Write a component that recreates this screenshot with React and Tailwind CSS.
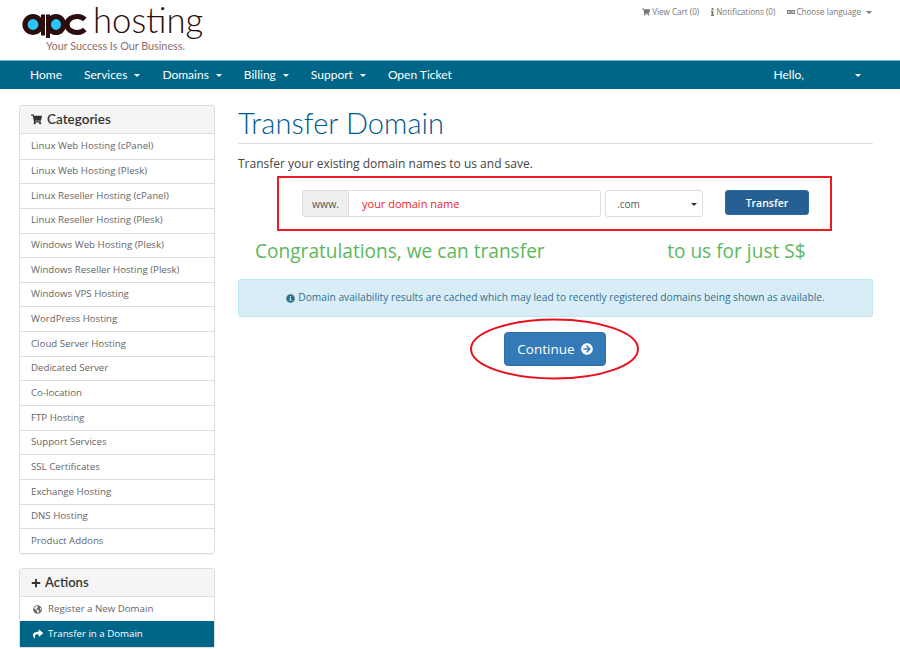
import React from "react";
import {
  FaShoppingCart,
  FaInfo,
  FaLanguage,
  FaPlus,
  FaGlobeAmericas,
  FaShare,
  FaArrowCircleRight,
  FaInfoCircle,
} from "react-icons/fa";

const categories = [
  "Linux Web Hosting (cPanel)",
  "Linux Web Hosting (Plesk)",
  "Linux Reseller Hosting (cPanel)",
  "Linux Reseller Hosting (Plesk)",
  "Windows Web Hosting (Plesk)",
  "Windows Reseller Hosting (Plesk)",
  "Windows VPS Hosting",
  "WordPress Hosting",
  "Cloud Server Hosting",
  "Dedicated Server",
  "Co-location",
  "FTP Hosting",
  "Support Services",
  "SSL Certificates",
  "Exchange Hosting",
  "DNS Hosting",
  "Product Addons",
];

const Caret = () => (
  <span className="inline-block w-0 h-0 border-x-[3px] border-x-transparent border-t-[3.5px] border-t-current" />
);

const NavItem = ({ label, caret }) => (
  <a className="flex items-center gap-[7px] text-white text-[12px] font-['Lato',sans-serif]">
    {label}
    {caret && <Caret />}
  </a>
);

const Logo = () => (
  <div className="relative w-[210px] h-[55px]">
    <svg width="70" height="30" viewBox="20 10 70 30" className="absolute left-[20px] top-[10px]">
      <ellipse cx="33" cy="24.5" rx="8" ry="8" fill="#29c5f6" stroke="#2b0d0d" strokeWidth="5.2" />
      <rect x="41" y="14.5" width="4" height="21" fill="#2b0d0d" />
      <ellipse cx="56" cy="24.5" rx="7.6" ry="8" fill="#29c5f6" stroke="#2b0d0d" strokeWidth="5.2" />
      <rect x="46" y="14.5" width="4" height="23.5" fill="#2b0d0d" />
      <path d="M84.8 19.5A10 8 0 1 0 84.8 29.5" fill="none" stroke="#2b0d0d" strokeWidth="5.2" />
    </svg>
    <span className="absolute left-[93px] top-[1.5px] text-[34.7px] leading-[36px] font-light text-[#2b0d0d] font-['Lato',sans-serif]">
      hosting
    </span>
    <span className="absolute left-[46px] top-[38.6px] text-[10.8px] leading-[14px] text-[#8d6e6e] font-['Lato',sans-serif] whitespace-nowrap">
      Your Success Is Our Business.
    </span>
  </div>
);

const App = () => {
  return (
    <div className="w-[900px] h-[649px] overflow-hidden bg-white font-['Open_Sans',sans-serif] text-[#555]">
      <header className="h-[60px] flex justify-between pr-[28px]">
        <Logo />
        <div className="flex gap-[12px] pt-[6px] text-[8.1px] leading-[12px] text-[#777]">
          <span className="flex items-center gap-[2px] h-[12px]">
            <FaShoppingCart className="text-[8px]" /> View Cart (0)
          </span>
          <span className="flex items-center gap-[2px] h-[12px]">
            <FaInfo className="w-[3px] h-[8px]" /> Notifications (0)
          </span>
          <span className="flex items-center gap-[1px] h-[12px]">
            <FaLanguage className="text-[8px]" /> Choose language
            <span className="ml-[4px] flex"><Caret /></span>
          </span>
        </div>
      </header>

      <nav className="h-[29px] bg-[#006687] border-t border-[#7fb2c3] flex items-center justify-between pl-[30px] pr-[39px]">
        <div className="flex items-center gap-[22px]">
          <NavItem label="Home" />
          <NavItem label="Services" caret />
          <NavItem label="Domains" caret />
          <NavItem label="Billing" caret />
          <NavItem label="Support" caret />
          <NavItem label="Open Ticket" />
        </div>
        <div className="flex items-center gap-[51px] text-white text-[12px] font-['Lato',sans-serif]">
          Hello,
          <Caret />
        </div>
      </nav>

      <div className="flex pl-[19px] pr-[27px] pt-[16px] gap-[23px]">
        <aside className="w-[196px] shrink-0">
          <section className="border border-[#ddd] rounded-[3px] shadow-[0_1px_1px_rgba(0,0,0,0.05)]">
            <h3 className="h-[28px] pb-[1px] bg-[#f5f5f5] border-b border-[#ddd] flex items-center gap-[5px] pl-[11px] text-[13.5px] font-semibold text-[#333] font-['Lato',sans-serif]">
              <FaShoppingCart className="text-[11px]" /> Categories
            </h3>
            {categories.map((c, i) => (
              <a
                key={c}
                className={`h-[24.65px] flex items-center pl-[11px] text-[9.7px] text-[#666] ${i > 0 ? "border-t border-[#ddd]" : ""}`}
              >
                {c}
              </a>
            ))}
          </section>

          <section className="mt-[14px] border border-[#ddd] rounded-[3px]">
            <h3 className="h-[28.5px] bg-[#f5f5f5] border-b border-[#ddd] flex items-center gap-[4px] pl-[11px] text-[13px] font-semibold text-[#333] font-['Lato',sans-serif]">
              <FaPlus className="text-[10px]" /> Actions
            </h3>
            <a className="h-[24px] flex items-center gap-[6px] pl-[13px] text-[9.7px] text-[#666]">
              <FaGlobeAmericas className="text-[9px]" /> Register a New Domain
            </a>
            <a className="h-[26px] flex items-center gap-[5px] pl-[13px] text-[9.7px] text-white bg-[#006687]">
              <FaShare className="text-[10px]" /> Transfer in a Domain
            </a>
          </section>
        </aside>

        <main className="flex-1">
          <h1 className="h-[38px] -mt-[1px] text-[29px] leading-[38px] font-light tracking-[0.05px] text-[#005a8c] font-['Lato',sans-serif]">
            Transfer Domain
          </h1>
          <div className="h-px mt-[1px] bg-[#ddd]" />
          <p className="mt-[11px] text-[12px] leading-[18px] text-[#444]">
            Transfer your existing domain names to us and save.
          </p>

          <div className="relative ml-[39px] mt-[3px] w-[555px] h-[55px] border-2 border-[#ed1c24] flex items-center pl-[23px]">
            <span className="w-[47px] h-[27px] pt-[2px] bg-[#eee] border border-[#ddd] rounded-l-[3px] flex items-center justify-center text-[10.5px] text-[#555]">
              www.
            </span>
            <span className="w-[252px] h-[27px] pt-[2px] border border-l-0 border-[#ddd] rounded-r-[3px] flex items-center pl-[13px] text-[11px] text-[#ed1c24]">
              your domain name
            </span>
            <span className="ml-[4px] w-[98px] h-[27px] border border-[#ddd] rounded-[3px] flex items-center justify-between pl-[11px] pr-[5px] text-[10px] text-[#555]">
              <span className="pt-[2px]">.com</span>
              <span className="text-[#333] pb-[2px]"><Caret /></span>
            </span>
            <button className="ml-[22px] w-[84px] h-[25px] pt-[2px] bg-[#265f92] border border-[#2e6da4] rounded-[3px] text-white text-[10.5px] font-semibold -mt-[2px]">
              Transfer
            </button>
          </div>

          <div className="mt-[7px] h-[26px] flex pl-[17px] text-[19.1px] leading-[26px] text-[#5cb85c]">
            <span>Congratulations, we can transfer</span>
            <span className="ml-[122.5px]">to us for just S$</span>
          </div>

          <div className="mt-[15px] h-[38px] bg-[#d9edf7] border border-[#bce8f1] rounded-[3px] flex items-center justify-center gap-[3px] text-[10.2px] text-[#31708f]">
            <FaInfoCircle className="text-[9px]" />
            Domain availability results are cached which may lead to recently registered domains being shown as available.
          </div>

          <div className="relative mt-[15px] flex justify-center pr-[1px]">
            <button className="w-[102px] h-[34px] bg-[#337ab7] border border-[#2e6da4] rounded-[4px] text-white text-[13.5px] flex items-center justify-center gap-[6px]">
              Continue <FaArrowCircleRight className="text-[12px]" />
            </button>
            <svg width="170" height="62" viewBox="0 0 170 62" className="absolute left-[232px] -top-[14px] pointer-events-none">
              <ellipse cx="84.5" cy="31" rx="83.5" ry="29.5" fill="none" stroke="#e8101c" strokeWidth="2" />
            </svg>
          </div>
        </main>
      </div>
    </div>
  );
};

export default App;
